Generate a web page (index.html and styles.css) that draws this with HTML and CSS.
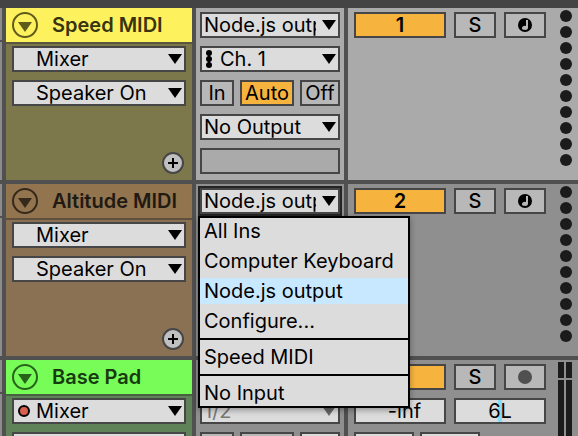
FILE: index.html
```
<!DOCTYPE html>
<html lang="en">
<head>
<meta charset="utf-8">
<title>Session mixer</title>
<link rel="stylesheet" href="styles.css">
</head>
<body>
<main class="tracks">
  <section class="track track-speed">
    <div class="edge"></div>
    <div class="name-col">
      <header class="title">
        <button class="fold" aria-label="Fold track"><svg viewBox="0 0 26 26"><circle cx="13" cy="13" r="12"/><path d="M6 10h14l-7 10z"/></svg></button>
        <h2>Speed MIDI</h2>
      </header>
      <div class="stack">
        <label class="pick indent"><select aria-label="Device"><option>Mixer</option></select><svg class="arrow" viewBox="0 0 14 10"><path d="M0 0h14L7 10z"/></svg></label>
        <label class="pick indent"><select aria-label="Parameter"><option>Speaker On</option></select><svg class="arrow" viewBox="0 0 14 10"><path d="M0 0h14L7 10z"/></svg></label>
      </div>
      <button class="add" aria-label="Add automation lane"><svg viewBox="0 0 22 22"><circle cx="11" cy="11" r="10"/><path d="M6 11h10M11 6v10"/></svg></button>
    </div>
    <div class="io-col stack">
      <label class="pick"><select aria-label="Input type"><option>Node.js output</option></select><svg class="arrow" viewBox="0 0 14 10"><path d="M0 0h14L7 10z"/></svg></label>
      <label class="pick channel"><svg class="channel-dots" viewBox="0 0 6 18"><path d="M2 2h2v14H2z"/><circle cx="3" cy="3" r="3"/><circle cx="3" cy="9" r="3"/><circle cx="3" cy="15" r="3"/></svg><select aria-label="Input channel"><option>Ch. 1</option></select><svg class="arrow" viewBox="0 0 14 10"><path d="M0 0h14L7 10z"/></svg></label>
      <div class="monitor"><button>In</button><button class="on">Auto</button><button>Off</button></div>
      <label class="pick"><select aria-label="Output type"><option>No Output</option></select><svg class="arrow" viewBox="0 0 14 10"><path d="M0 0h14L7 10z"/></svg></label>
      <div class="blank"></div>
    </div>
    <div class="mix-col">
      <div class="controls">
        <button class="on number">1</button><button class="solo">S</button>
        <button aria-label="Arm"><svg class="note" viewBox="0 0 14 14"><circle cx="7" cy="7" r="7"/><path d="M8 2h2v8a3 2 0 1 1-2-2z"/></svg></button>
      </div>
      <div class="dots"><i></i><i></i><i></i><i></i><i></i><i></i><i></i><i></i><i></i><i></i></div>
    </div>
  </section>

  <section class="track track-altitude">
    <div class="edge"></div>
    <div class="name-col">
      <header class="title">
        <button class="fold" aria-label="Fold track"><svg viewBox="0 0 26 26"><circle cx="13" cy="13" r="12"/><path d="M6 10h14l-7 10z"/></svg></button>
        <h2>Altitude MIDI</h2>
      </header>
      <div class="stack">
        <label class="pick indent"><select aria-label="Device"><option>Mixer</option></select><svg class="arrow" viewBox="0 0 14 10"><path d="M0 0h14L7 10z"/></svg></label>
        <label class="pick indent"><select aria-label="Parameter"><option>Speaker On</option></select><svg class="arrow" viewBox="0 0 14 10"><path d="M0 0h14L7 10z"/></svg></label>
      </div>
      <button class="add" aria-label="Add automation lane"><svg viewBox="0 0 22 22"><circle cx="11" cy="11" r="10"/><path d="M6 11h10M11 6v10"/></svg></button>
    </div>
    <div class="io-col stack">
      <label class="pick open"><select aria-label="Input type"><option>Node.js output</option></select><svg class="arrow" viewBox="0 0 14 10"><path d="M0 0h14L7 10z"/></svg></label>
      <div class="menu" role="menu">
        <button role="menuitem">All Ins</button>
        <button role="menuitem">Computer Keyboard</button>
        <button role="menuitem" class="current">Node.js output</button>
        <button role="menuitem">Configure...</button>
        <hr>
        <button role="menuitem">Speed MIDI</button>
        <hr>
        <button role="menuitem">No Input</button>
      </div>
    </div>
    <div class="mix-col">
      <div class="controls">
        <button class="on number">2</button><button class="solo">S</button>
        <button aria-label="Arm"><svg class="note" viewBox="0 0 14 14"><circle cx="7" cy="7" r="7"/><path d="M8 2h2v8a3 2 0 1 1-2-2z"/></svg></button>
      </div>
      <div class="dots"><i></i><i></i><i></i><i></i><i></i><i></i><i></i><i></i><i></i><i></i></div>
    </div>
  </section>

  <section class="track track-base">
    <div class="edge"></div>
    <div class="name-col">
      <header class="title">
        <button class="fold" aria-label="Fold track"><svg viewBox="0 0 26 26"><circle cx="13" cy="13" r="12"/><path d="M6 10h14l-7 10z"/></svg></button>
        <h2>Base Pad</h2>
      </header>
      <div class="stack">
        <label class="pick indent"><svg class="led" viewBox="0 0 12 12"><circle cx="6" cy="6" r="5"/></svg><select aria-label="Device"><option>Mixer</option></select><svg class="arrow" viewBox="0 0 14 10"><path d="M0 0h14L7 10z"/></svg></label>
        <label class="pick indent"><select aria-label="Parameter"></select></label>
      </div>
    </div>
    <div class="io-col stack">
      <label class="pick"><select aria-label="Input type"></select></label>
      <label class="pick dim"><select aria-label="Input channel"><option>1/2</option></select><svg class="arrow" viewBox="0 0 14 10"><path d="M0 0h14L7 10z"/></svg></label>
      <div class="monitor"><button aria-label="Monitor in"></button><button aria-label="Monitor auto"></button><button class="light" aria-label="Monitor off"></button></div>
    </div>
    <div class="mix-col">
      <div class="controls">
        <button class="on number" aria-label="Track on"></button><button class="solo">S</button>
        <button aria-label="Arm"><svg class="record" viewBox="0 0 14 14"><circle cx="7" cy="7" r="7"/></svg></button>
        <div class="value-box"><svg class="knob" viewBox="0 0 8 8"><circle cx="4" cy="4" r="4"/></svg><input aria-label="Volume" value="-inf"></div>
        <div class="value-box pan"><input aria-label="Pan" value="6L"></div>
        <div class="sends"><input aria-label="Send A"><input aria-label="Send B"></div>
      </div>
      <div class="meter"><i></i><i></i><i></i><i></i></div>
    </div>
  </section>
</main>
</body>
</html>
```
FILE: styles.css
```
* { box-sizing: border-box; }

:root {
  --line: #505050;
  --border: #464646;
  --field: #dcdcdc;
  --button: #b8b8b8;
  --amber: #f6b43e;
}

body {
  margin: 0;
  height: 100vh;
  background: var(--line);
  color: #000;
  font: 20px/22px Inter, "Liberation Sans", sans-serif;
}

button, select, input { font: inherit; color: inherit; border-radius: 0; margin: 0; }
button { padding: 0; border: 2px solid var(--border); background: var(--button); }
svg { display: block; }

.tracks {
  display: grid;
  grid-template-rows: auto auto minmax(0, 1fr);
  gap: 4px;
  height: 100%;
  border-top: 8px solid #444;
}

.track {
  --panel: #aaa;
  display: grid;
  grid-template-columns: 2px 186px 148px minmax(0, 1fr);
  column-gap: 4px;
  min-height: 172px;
}
.track-base { min-height: 0; overflow: hidden; }
.track-altitude, .track-base { --panel: #8f8f8f; }
.track-speed { --head: #fdf25e; --body: #7d784c; --ink: #37340f; --ring: #605b1c; --rule: #59563c; }
.track-altitude { --head: #92744f; --body: #8b7154; --ink: #211a12; --ring: #35291c; --rule: #604f3c; }
.track-base { --head: #78fd58; --body: #608259; --ink: #173a10; --ring: #28631b; --rule: #476141; }

.edge {
  background: linear-gradient(#8c8c8c 32px, var(--line) 32px 34px, #8c8c8c 34px);
}

.name-col {
  display: flex;
  flex-direction: column;
  background: var(--body);
}

.title {
  display: flex;
  align-items: center;
  gap: 14px;
  height: 36px;
  padding-left: 6px;
  background: var(--head);
  border-bottom: 2px solid var(--rule);
  color: var(--ink);
}
.title h2 { margin: 0; font-size: 20px; font-weight: 600; white-space: nowrap; }

.fold { width: 26px; height: 26px; border: 0; background: none; }
.fold circle { fill: none; stroke: var(--ring); stroke-width: 2; }
.fold path { fill: var(--ring); }

.stack { display: flex; flex-direction: column; gap: 8px; }
.name-col .stack { padding: 2px 6px; }
.io-col { position: relative; padding: 4px; background: var(--panel); }

.add { width: 22px; height: 22px; margin: auto 8px 6px auto; border: 0; background: none; }
.add circle { fill: #c0c0c0; stroke: var(--border); stroke-width: 2; }
.add path { stroke: #000; stroke-width: 2; }

.pick {
  display: flex;
  flex: none;
  align-items: center;
  height: 26px;
  padding: 0 2px;
  border: 2px solid var(--border);
  background: var(--field);
}
.pick select {
  flex: 1;
  min-width: 0;
  height: 22px;
  padding: 0;
  border: 0;
  appearance: none;
  background: none;
  outline: 0;
}
.arrow { flex: none; width: 14px; height: 10px; margin-left: 6px; }
.pick.indent { position: relative; padding-left: 22px; }
.led { position: absolute; left: 4px; top: 5px; width: 12px; height: 12px; }
.led circle { fill: #d9604f; stroke: #000; stroke-width: 2; }
.channel { padding-left: 4px; gap: 8px; }
.channel-dots { flex: none; width: 6px; height: 18px; }
.dim { color: #777; }
.dim .arrow { fill: #666; }
.open { outline: 2px solid #242424; }

.monitor { display: grid; grid-template-columns: 34px 54px 40px; gap: 6px; }
.monitor button { height: 26px; overflow: hidden; }
.monitor .light { background: var(--field); }
button.on { background: var(--amber); }
.blank { height: 26px; border: 2px solid var(--border); }

.menu {
  position: absolute;
  z-index: 2;
  top: 32px;
  left: 2px;
  display: grid;
  gap: 4px;
  width: 212px;
  border: 2px solid #000;
  background: var(--field);
  box-shadow: 0 2px 6px rgb(0 0 0 / 35%);
}
.menu button {
  height: 26px;
  padding: 0 4px;
  border: 0;
  background: none;
  text-align: left;
  white-space: nowrap;
}
.menu .current { background: #c8e8ff; }
.menu hr { width: 100%; height: 2px; margin: 0; border: 0; background: #000; }

.mix-col {
  display: flex;
  justify-content: space-between;
  padding: 0 6px;
  background: var(--panel);
}
.controls {
  display: grid;
  grid-template-columns: 92px 42px 42px;
  grid-auto-rows: 26px;
  gap: 8px;
  padding-top: 4px;
}
.controls button { display: grid; place-items: center; }
.number, .solo { font-weight: 600; }
.solo { font-weight: 500; }
.note, .record { width: 14px; height: 14px; }
.note path { fill: var(--button); }
.record { fill: #505050; }

.dots { display: grid; align-content: start; gap: 4px; padding-top: 2px; }
.dots i { width: 12px; height: 12px; border-radius: 50%; background: #1b1b1b; }

.value-box {
  display: flex;
  align-items: center;
  border: 2px solid var(--border);
  background: var(--field);
}
.value-box input { width: 100%; min-width: 0; height: 22px; padding: 0; border: 0; background: none; text-align: center; }
.knob { flex: none; width: 8px; height: 8px; margin-left: 1px; align-self: start; }
.pan { grid-column: span 2; background: linear-gradient(#86dcf5, #86dcf5) center / 4px 100% no-repeat var(--field); }
.sends { grid-column: span 3; display: grid; grid-template-columns: 60px 60px; gap: 6px; }
.sends input { width: 100%; min-width: 0; border: 2px solid var(--border); background: var(--field); }

.meter {
  display: grid;
  grid-template-columns: 6px 6px;
  grid-template-rows: 16px 1fr;
  gap: 2px;
  padding-top: 2px;
}
.meter i { background: #1b1b1b; }
```
